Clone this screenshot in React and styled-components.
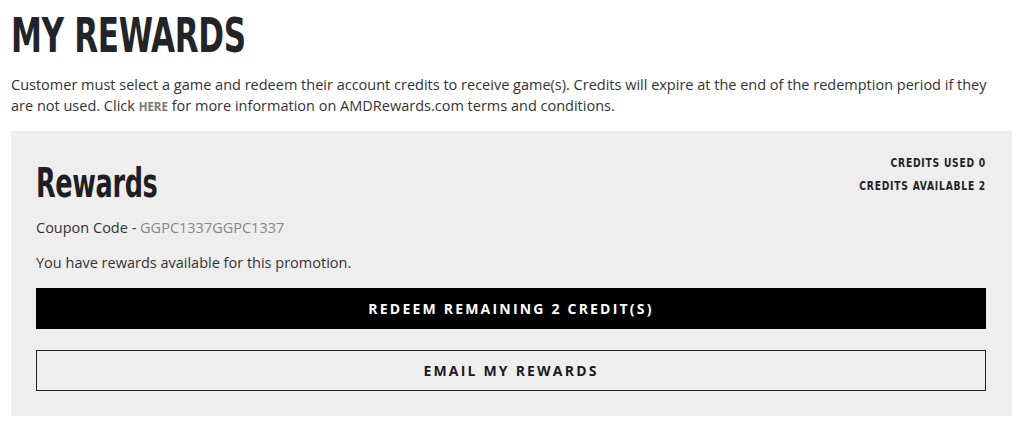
import React from "react";
import styled, { createGlobalStyle } from "styled-components";

const Global = createGlobalStyle`
  html, body { margin: 0; padding: 0; background: #fff; }
  body { font-family: "Open Sans", "Liberation Sans", sans-serif; color: #333; }
  * { box-sizing: border-box; }
`;

const Page = styled.div`
  padding: 11px 12px 0 11px;
`;

const Title = styled.h1`
  margin: 0;
  font-family: "DejaVu Sans Condensed", "DejaVu Sans", sans-serif;
  font-weight: 700;
  font-size: 48px;
  line-height: 48px;
  letter-spacing: -0.5px;
  color: #22242a;
  text-transform: uppercase;
  transform: scaleX(0.72);
  transform-origin: left center;
`;

const Intro = styled.p`
  margin: 15px 0 15px;
  font-size: 14.5px;
  line-height: 21px;
  color: #333;
`;

const Link = styled.a`
  font-size: 11.5px;
  line-height: 1;
  font-weight: 700;
  color: #777;
  text-decoration: none;
  text-transform: uppercase;
`;

const Panel = styled.section`
  background: #eeeeee;
  padding: 21px 26px 25px 25px;
  display: flex;
  flex-direction: column;
`;

const Header = styled.div`
  display: flex;
  justify-content: space-between;
  align-items: flex-start;
`;

const PanelTitle = styled.h2`
  margin: 11px 0 14px;
  font-family: "DejaVu Sans Condensed", "DejaVu Sans", sans-serif;
  font-weight: 700;
  font-size: 40px;
  line-height: 40px;
  letter-spacing: -0.5px;
  color: #1d1f24;
  transform: scaleX(0.71);
  transform-origin: left center;
`;

const Credits = styled.div`
  display: flex;
  flex-direction: column;
  align-items: flex-end;
  font-family: "DejaVu Sans Condensed", "DejaVu Sans", sans-serif;
  font-weight: 700;
  font-size: 12px;
  line-height: 23px;
  letter-spacing: 0.9px;
  color: #22242a;
  text-transform: uppercase;
  transform: scaleX(0.85);
  transform-origin: right center;
`;

const Line = styled.p`
  margin: 0 0 14px;
  font-size: 14.5px;
  line-height: 21px;
  color: #333;
`;

const Code = styled.span`
  color: #888;
`;

const Button = styled.button`
  display: block;
  width: 100%;
  height: 41px;
  margin-top: ${(p) => (p.$first ? "1px" : "21px")};
  border: 1px solid ${(p) => (p.$primary ? "#000" : "#222")};
  background: ${(p) => (p.$primary ? "#000" : "transparent")};
  color: ${(p) => (p.$primary ? "#fff" : "#1a1a1a")};
  font-family: "Open Sans", "Liberation Sans", sans-serif;
  font-weight: 700;
  font-size: 14px;
  letter-spacing: 2.2px;
  text-transform: uppercase;
  cursor: pointer;
  padding: 0;
`;

export default function App() {
  return (
    <Page>
      <Global />
      <Title>My Rewards</Title>
      <Intro>
        Customer must select a game and redeem their account credits to receive game(s). Credits will
        expire at the end of the redemption period if they are not used. Click <Link href="#">here</Link> for
        more information on AMDRewards.com terms and conditions.
      </Intro>
      <Panel>
        <Header>
          <PanelTitle>Rewards</PanelTitle>
          <Credits>
            <span>Credits Used 0</span>
            <span>Credits Available 2</span>
          </Credits>
        </Header>
        <Line>
          Coupon Code - <Code>GGPC1337GGPC1337</Code>
        </Line>
        <Line>You have rewards available for this promotion.</Line>
        <Button $primary $first>Redeem Remaining 2 Credit(s)</Button>
        <Button>Email My Rewards</Button>
      </Panel>
    </Page>
  );
}
